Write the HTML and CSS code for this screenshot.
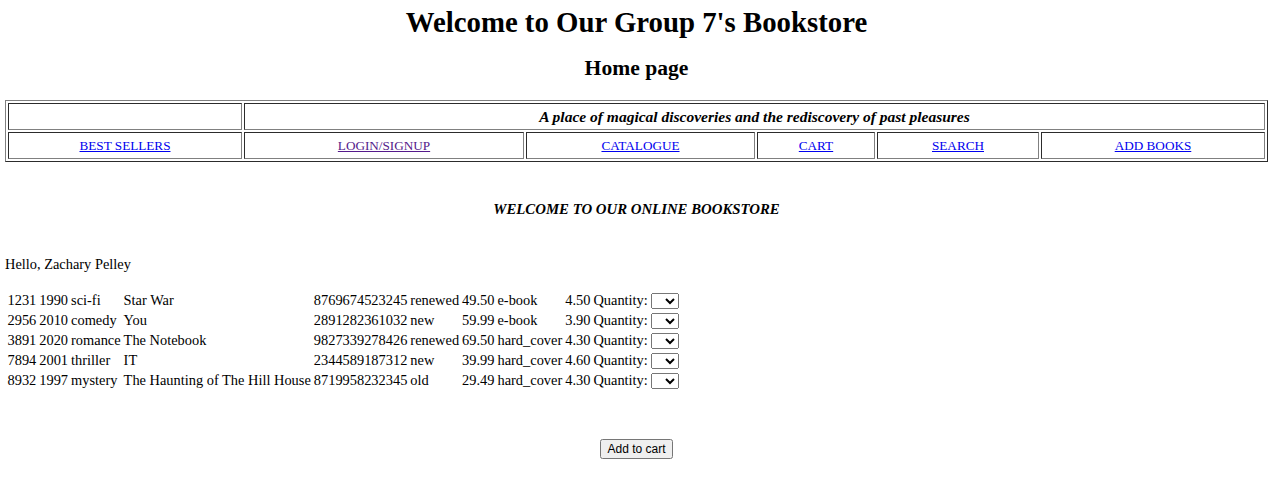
FILE: index.html
```html
<!DOCTYPE html>
<html>
<head>
<meta charset="utf-8">
<title>Group 7's Bookstore</title>
<link rel="stylesheet" href="styles.css">
</head>
<body>
<h1 class="title">Welcome to Our Group 7's Bookstore</h1>
<h2 class="subtitle">Home page</h2>
<table class="nav" border="1">
  <colgroup>
    <col class="c1"><col class="c2"><col class="c3"><col class="c4"><col class="c5"><col class="c6">
  </colgroup>
  <tr>
    <td></td>
    <td colspan="5" class="tagline">A place of magical discoveries and the rediscovery of past pleasures</td>
  </tr>
  <tr>
    <td><a class="link" href="#">BEST SELLERS</a></td>
    <td><a class="link visited" href="#">LOGIN/SIGNUP</a></td>
    <td><a class="link" href="#">CATALOGUE</a></td>
    <td><a class="link" href="#">CART</a></td>
    <td><a class="link" href="#">SEARCH</a></td>
    <td><a class="link" href="#">ADD BOOKS</a></td>
  </tr>
</table>
<p class="welcome">WELCOME TO OUR ONLINE BOOKSTORE</p>
<p class="hello">Hello, Zachary Pelley</p>
<table class="books">
  <tr><td>1231</td><td>1990</td><td>sci-fi</td><td>Star War</td><td>8769674523245</td><td>renewed</td><td>49.50</td><td>e-book</td><td>4.50</td><td>Quantity:</td><td><select class="qty"></select></td></tr>
  <tr><td>2956</td><td>2010</td><td>comedy</td><td>You</td><td>2891282361032</td><td>new</td><td>59.99</td><td>e-book</td><td>3.90</td><td>Quantity:</td><td><select class="qty"></select></td></tr>
  <tr><td>3891</td><td>2020</td><td>romance</td><td>The Notebook</td><td>9827339278426</td><td>renewed</td><td>69.50</td><td>hard_cover</td><td>4.30</td><td>Quantity:</td><td><select class="qty"></select></td></tr>
  <tr><td>7894</td><td>2001</td><td>thriller</td><td>IT</td><td>2344589187312</td><td>new</td><td>39.99</td><td>hard_cover</td><td>4.60</td><td>Quantity:</td><td><select class="qty"></select></td></tr>
  <tr><td>8932</td><td>1997</td><td>mystery</td><td>The Haunting of The Hill House</td><td>8719958232345</td><td>old</td><td>29.49</td><td>hard_cover</td><td>4.30</td><td>Quantity:</td><td><select class="qty"></select></td></tr>
</table>
<div class="actions"><button class="add">Add to cart</button></div>
</body>
</html>
```

FILE: styles.css
```css
html, body {
  background: #fff;
}
body {
  margin: 0 5px;
  font-family: "Liberation Serif", "Times New Roman", serif;
  font-size: 14.4px;
  color: #000;
}
.title {
  margin: 5px 0 0;
  font-size: 28.8px;
  line-height: 34px;
  text-align: center;
  font-weight: bold;
}
.subtitle {
  margin: 16px 0 19px;
  font-size: 21.6px;
  line-height: 26px;
  text-align: center;
  font-weight: bold;
}
.nav {
  width: 100%;
  table-layout: fixed;
  border-spacing: 2px;
  border: 1px outset #808080;
  font-family: "Liberation Serif", "Times New Roman", serif;
  font-size: 13.2px;
}
.nav td {
  border: 1px inset #808080;
  text-align: center;
  height: 25px;
  padding: 0 1px;
}
.c1 { width: 234px; }
.c2 { width: 280px; }
.c3 { width: 229px; }
.c4 { width: 118px; }
.c5 { width: 162px; }
.c6 { width: auto; }
.tagline {
  font-style: italic;
  font-weight: bold;
  font-size: 15.5px;
}
.link {
  color: #0000ee;
  text-decoration: underline;
}
.link.visited {
  color: #551a8b;
}
.welcome {
  margin: 38px 0 0;
  line-height: 18px;
  text-align: center;
  font-weight: bold;
  font-style: italic;
  font-size: 14.8px;
}
.hello {
  margin: 37px 0 0;
  line-height: 18px;
}
.books {
  margin-top: 16px;
  border-spacing: 2px;
}
.books td {
  padding: 0 0.5px;
  height: 18px;
  line-height: 16px;
  white-space: nowrap;
}
.qty {
  width: 28px;
  height: 16px;
  vertical-align: middle;
  margin: 0;
}
.actions {
  margin-top: 48px;
  text-align: center;
}
.add {
  font-family: "Liberation Sans", Arial, sans-serif;
  font-size: 12px;
  line-height: 14px;
  padding: 1px 5px;
}
```
